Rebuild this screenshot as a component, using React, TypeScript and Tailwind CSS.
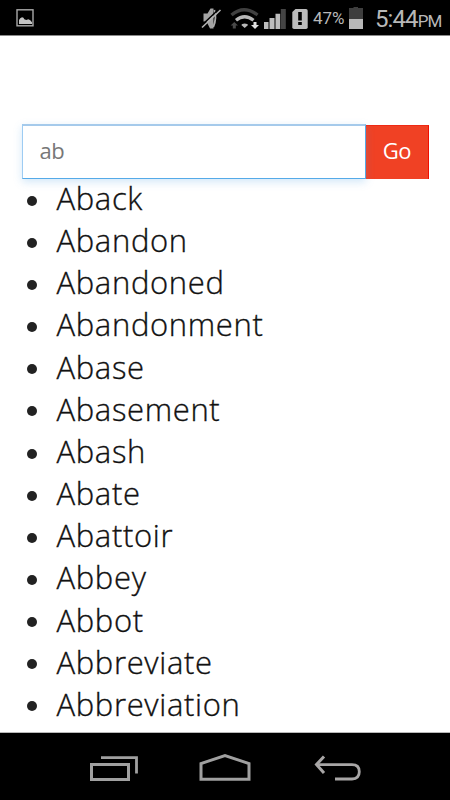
import { useState } from "react";

const words = [
  "Aback",
  "Abandon",
  "Abandoned",
  "Abandonment",
  "Abase",
  "Abasement",
  "Abash",
  "Abate",
  "Abattoir",
  "Abbey",
  "Abbot",
  "Abbreviate",
  "Abbreviation",
];

function StatusBar() {
  return (
    <header className="flex h-9 shrink-0 items-start border-b border-[#8a8a8a] bg-black font-[Roboto,sans-serif] text-[#b8b8b8]">
      <svg className="ml-4 mt-[9px] h-[18px] w-[18px]" viewBox="0 0 18 18" aria-hidden="true">
        <rect x="1" y="0.8" width="16" height="16" fill="none" stroke="#a8a8a8" strokeWidth="1.4" />
        <path d="M3 15v-4q1-2 3-2.7 1.8 0 2.3 2l2 .7 2-.7 2 1 1.7 2V15z" fill="#c4c4c4" />
      </svg>

      <div className="ml-auto flex h-9 items-start">
        <svg className="h-[35px] w-[124px]" viewBox="196 0 124 35" aria-hidden="true">
          {/* muted */}
          <path d="M203.5 13.5h4l3-5h3v20H210l-3.5-7h-3z" fill="#a4a4a4" />
          <path d="M214.3 10q2.8 8-1 17" fill="none" stroke="#aaa" strokeWidth="1.8" />
          <path d="M200.5 26.5 219 9" stroke="#000" strokeWidth="1.5" />
          <path d="M202 27.5 220.5 10" stroke="#b4b4b4" strokeWidth="1.6" />

          {/* wifi */}
          <path d="M231.5 15q12.5-10.5 26 0" fill="none" stroke="#404040" strokeWidth="3.4" />
          <path d="M236 20.3q8.5-7 17.5 0" fill="none" stroke="#b8b8b8" strokeWidth="3.3" />
          <path d="m241.3 25 1-1q2.4-1.2 4.8 0l1 1-3.4 3z" fill="#b8b8b8" />
          <path d="m234.3 22 3.7 3.5h-2.2v3h-3v-3h-2.2z" fill="#484848" />
          <path d="m255 29 4-4h-2.5v-3h-3v3H251z" fill="#e0e0e0" />

          {/* signal */}
          <path d="M264 22h4.5v7H264zM269.5 18h5v11h-5zM275.5 13.7h4.7V29h-4.7z" fill="#bcbcbc" />
          <path d="M280.8 9h5v20h-5z" fill="#444" />

          {/* sim warning */}
          <path d="M295.5 9h10.5q1.7 0 1.7 1.7v16.6q0 1.7-1.7 1.7h-12q-1.7 0-1.7-1.7V12z" fill="#bcbcbc" />
          <path d="M298.2 12h3.6v8.5h-3.6zM298.2 22h3.6v3h-3.6z" fill="#000" />
        </svg>
        <span className="-ml-[6.5px] mt-2 w-[31px] whitespace-nowrap text-[17px] leading-5">47%</span>
        <svg className="ml-[5px] mt-[7px] h-[22px] w-[14px]" viewBox="0 0 14 22" aria-hidden="true">
          <path d="M0 1h4.5V0H9v1h5v11H0z" fill="#3e3e3e" />
          <path d="M0 12h14v10H0z" fill="#b8b8b8" />
        </svg>
        <span className="ml-3 mt-[5px] flex w-[75px] items-baseline whitespace-nowrap leading-7">
          <span className="text-[24px] tracking-[-0.9px]">5:44</span>
          <span className="text-[17px] tracking-[-0.8px]">PM</span>
        </span>
      </div>
    </header>
  );
}

function NavBar() {
  return (
    <nav className="flex h-[68px] shrink-0 items-start border-t border-[#b8b8b8] bg-black pl-[89px] pt-5">
      <button type="button" aria-label="Recent apps">
        <svg className="block h-[30px] w-[50px]" viewBox="89 753 50 30" fill="none" stroke="#a0a0a0">
          <path d="M91.5 764.5h37v15h-37z" strokeWidth="3" />
          <path d="M101 757.7h35.5v15.8" strokeWidth="2.8" />
        </svg>
      </button>
      <button type="button" aria-label="Home" className="ml-[59px]">
        <svg className="block h-[30px] w-[54px]" viewBox="198 753 54 30" fill="none" stroke="#a0a0a0">
          <path d="M201 779.2v-15.7l24-8 24 8v15.7z" strokeWidth="3" />
        </svg>
      </button>
      <button type="button" aria-label="Back" className="ml-[61px]">
        <svg className="block h-[30px] w-[50px]" viewBox="313 753 50 30" fill="none" stroke="#a8a6a6">
          <path d="M316 764.7h36q7.3 0 7.3 7t-7.3 7.3h-17" strokeWidth="2.8" />
          <path d="m324 756.5-7.5 8 7.5 8.5" strokeWidth="3" />
        </svg>
      </button>
    </nav>
  );
}

export default function App() {
  const [query, setQuery] = useState("ab");

  return (
    <div className="flex h-[800px] w-[450px] flex-col overflow-hidden bg-white font-['Open_Sans',sans-serif]">
      <StatusBar />
      <main className="min-h-0 flex-1 overflow-hidden pt-[88px]">
        <form className="ml-[21.5px] flex h-[55px] w-[408px]" onSubmit={(e) => e.preventDefault()}>
          <input
            value={query}
            onChange={(e) => setQuery(e.target.value)}
            aria-label="Search"
            className="relative z-10 w-[344px] border border-t-2 border-[#55aae8] border-l-[#9dccf3] border-t-[#a5caeb] pb-1 pl-[17px] text-[22px] tracking-[-0.4px] text-[#777] shadow-[0_3px_8px_rgba(80,165,230,0.25)] outline-none"
          />
          <button
            type="submit"
            className="mt-px w-[63.5px] border-r border-t border-r-[#f00e00] border-t-[#ee2a14] bg-[#f04124] pb-1 text-[22px] tracking-[-0.6px] text-white"
          >
            Go
          </button>
        </form>
        <ul className="-mt-0.5 text-[31px] font-light leading-[42.15px] tracking-[0.65px] text-[#111] [-webkit-text-stroke:0.35px_#111]">
          {words.map((word) => (
            <li key={word} className="flex items-center">
              <span className="ml-[26.5px] mr-5 mt-[5px] h-[10px] w-[10px] rounded-full bg-[#222]" />
              {word}
            </li>
          ))}
        </ul>
      </main>
      <NavBar />
    </div>
  );
}
